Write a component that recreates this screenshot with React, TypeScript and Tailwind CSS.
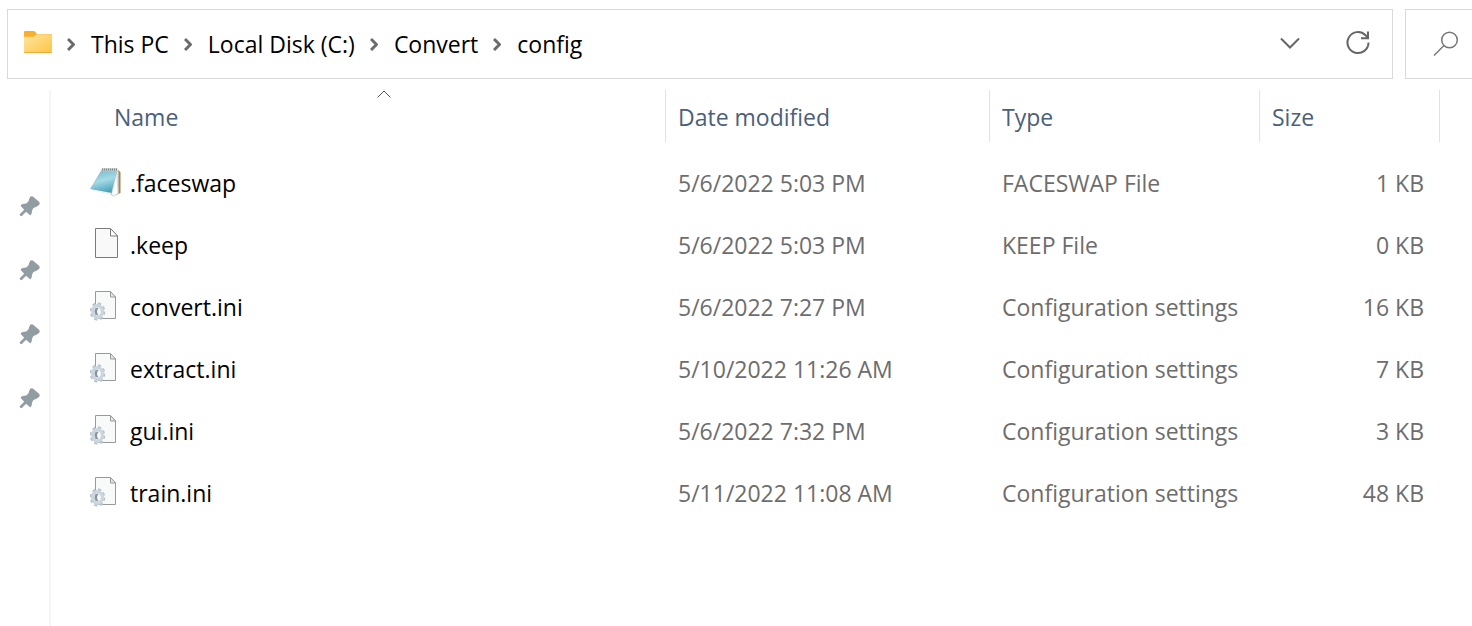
type FileKind = "notepad" | "blank" | "settings";

const crumbs = ["This PC", "Local Disk (C:)", "Convert", "config"];

const pinned = ["Desktop", "Downloads", "Documents", "Pictures"];

const files: { name: string; date: string; type: string; size: string; kind: FileKind }[] = [
  { name: ".faceswap", date: "5/6/2022 5:03 PM", type: "FACESWAP File", size: "1 KB", kind: "notepad" },
  { name: ".keep", date: "5/6/2022 5:03 PM", type: "KEEP File", size: "0 KB", kind: "blank" },
  { name: "convert.ini", date: "5/6/2022 7:27 PM", type: "Configuration settings", size: "16 KB", kind: "settings" },
  { name: "extract.ini", date: "5/10/2022 11:26 AM", type: "Configuration settings", size: "7 KB", kind: "settings" },
  { name: "gui.ini", date: "5/6/2022 7:32 PM", type: "Configuration settings", size: "3 KB", kind: "settings" },
  { name: "train.ini", date: "5/11/2022 11:08 AM", type: "Configuration settings", size: "48 KB", kind: "settings" },
];

const FolderIcon = () => (
  <svg width="30" height="28" viewBox="0 0 30 28" className="shrink-0">
    <defs>
      <linearGradient id="folder" x1="0" y1="0" x2="1" y2="1">
        <stop offset="0" stopColor="#ffe5a0" />
        <stop offset="1" stopColor="#ffc545" />
      </linearGradient>
    </defs>
    <path d="M1 2q0-1 1-1h8.500q1 0 1.700.7L14 4h14q1 0 1 1v8H1z" fill="#f8b02c" />
    <path d="M1 7.500q0-.8.800-.8H10q1 0 1.700-.7l1.300-1.200q.7-.6 1.500-.6H28q1 0 1 1V22q0 1-1 1H2q-1 0-1-1z" fill="url(#folder)" />
    <path d="M1 21.500q0 1.500 1 1.500h26q1 0 1-1.500-.3.700-1 .7H2q-.7 0-1-.7z" fill="#e9a02e" />
  </svg>
);

const CrumbChevron = () => (
  <svg width="8" height="14" viewBox="0 0 8 14" className="shrink-0" fill="none" stroke="#6b6b6b" strokeWidth="3">
    <path d="M1 2l5.500 5.500L1 13" />
  </svg>
);

const PinIcon = () => (
  <svg width="22" height="22" viewBox="0 0 22 22" fill="#929ca3">
    <path d="M11 2q1.200-1.400 2.800-.4l6.300 5.200q1.200 1.300.2 3l-2.300 1.700q-1.700.8-3.600 1.400l-1.300 2.500q-.2 2.500-.9 4-.7 1.300-1.700.4l-3.400-3.100-4 4q-1.100.9-2-.1-.9-1 .1-1.900l4-4-3.100-3.300q-1-1.300.4-2 2.200-.9 4.800-1l2.400-2.400q.3-2.200 1.300-4z" />
  </svg>
);

const NotepadIcon = () => (
  <svg width="32" height="32" viewBox="0 0 32 32">
    <defs>
      <linearGradient id="pad" x1="0.300" y1="0" x2="0.600" y2="1">
        <stop offset="0" stopColor="#78bccd" />
        <stop offset="0.450" stopColor="#a4dbe6" />
        <stop offset="1" stopColor="#449fb7" />
      </linearGradient>
    </defs>
    <path d="M28 3l2.500 2v21L26 28z" fill="#a98549" />
    <path d="M26 3l2.500 1.500v22L24 29 20 27z" fill="#e9eef1" stroke="#a8b4ba" strokeWidth=".5" />
    <path d="M1 22.500l21 5 3-2L9 20z" fill="#8a9ba3" />
    <path d="M11.500 3.500H27L21.500 26 .5 22z" fill="url(#pad)" stroke="#83aab6" strokeWidth=".5" />
    <path d="M.5 22l21 4-.2 1.500L.5 23z" fill="#edf5f7" />
    <path d="M26.800 5L21.500 27.500l3 1.500L28 26z" fill="#fafcfd" stroke="#b7c2c7" strokeWidth=".5" />
    <path d="M12 1.200h15.500l-.5 3H10.900z" fill="#c2c9cc" />
    <path d="M12 2.500h15.500" stroke="#7c878c" strokeWidth="2" strokeDasharray="1 1" />
  </svg>
);

const BlankIcon = () => (
  <svg width="32" height="36" viewBox="0 0 32 36">
    <path d="M5.500 1.500H20l7.500 7.500v21.500h-22z" fill="#f9f9f9" stroke="#7b7b7b" />
    <path d="M20.500 1.500V9h7z" fill="#fff" stroke="#7b7b7b" />
  </svg>
);

const SettingsFileIcon = () => (
  <svg width="32" height="36" viewBox="0 0 32 36">
    <path d="M5.500 2.500H20l5.500 5.500v21.500h-20z" fill="#f8f9f9" stroke="#999" />
    <path d="M20.500 2.500V8h5z" fill="#e8e8e8" stroke="#999" />
    <ellipse cx="7.500" cy="22.500" rx="6.200" ry="7.800" fill="none" stroke="#b7c3cc" strokeWidth="3" strokeDasharray="3 2.520" />
    <ellipse cx="7.500" cy="22.500" rx="4.700" ry="5.800" fill="none" stroke="#cbd5dd" strokeWidth="3.500" />
    <ellipse cx="7.700" cy="22.500" rx="3" ry="3.800" fill="#f6f8f9" />
    <path d="M8.500 18.900a3.200 3.700 0 1 0 0 7.200q-3-3.600 0-7.200z" fill="#87929a" />
  </svg>
);

const FileIcon = ({ kind }: { kind: FileKind }) => {
  if (kind === "notepad") return <NotepadIcon />;
  if (kind === "blank") return <BlankIcon />;
  return <SettingsFileIcon />;
};

const AddressBar = () => (
  <header className="flex gap-3 pt-[9px] pl-[7px]">
    <div className="flex h-[70px] flex-1 items-center border border-[#d9d9d9] pl-[15px]">
      <FolderIcon />
      <nav aria-label="Address" className="flex-1 pl-[14px]">
        <ol className="flex items-center gap-[15px]">
          {crumbs.map((crumb) => (
            <li key={crumb} className="flex items-center gap-4 whitespace-nowrap">
              <CrumbChevron />
              <a href="#" className="text-black">{crumb}</a>
            </li>
          ))}
        </ol>
      </nav>
      <button type="button" aria-label="Previous locations" className="mr-[45px]">
        <svg width="22" height="24" viewBox="0 0 22 24" fill="none" stroke="#666" strokeWidth="2">
          <path d="M2 6.500l9 9 9-9" />
        </svg>
      </button>
      <button type="button" aria-label="Refresh" className="mr-[22px]">
        <svg width="24" height="28" viewBox="0 0 24 28" fill="none" stroke="#666" strokeWidth="2">
          <path d="M22.500 12.500A10.500 10.500 0 1 1 19.500 5.200L22 8" />
          <path d="M22 1.500V8.200H15" />
        </svg>
      </button>
    </div>
    <div className="flex h-[70px] w-[67px] items-center border border-r-0 border-[#d9d9d9] pl-[27px]">
      <button type="button" aria-label="Search">
        <svg width="26" height="26" viewBox="0 0 26 26" fill="none" stroke="#777" strokeWidth="1.500">
          <circle cx="16.500" cy="9" r="7.800" />
          <path d="M11 14.500L1 24.500" />
        </svg>
      </button>
    </div>
  </header>
);

const QuickAccess = () => (
  <aside className="flex w-[51px] shrink-0 flex-col items-center gap-[42px] border-r-2 border-[#f5f5f5] pt-[105px] pl-[10px]">
    {pinned.map((place) => (
      <button key={place} type="button" aria-label={place}>
        <PinIcon />
      </button>
    ))}
  </aside>
);

const FileTable = () => (
  <table className="w-full table-fixed border-collapse text-left">
    <colgroup>
      <col />
      <col className="w-[324px]" />
      <col className="w-[270px]" />
      <col className="w-[180px]" />
    </colgroup>
    <thead className="text-[#4c607a]">
      <tr>
        <th className="p-0 pb-[10px] pl-[51px] font-normal" aria-sort="ascending">
          <div className="relative flex h-[52px] items-center border-r border-[#e2e2e2] pt-0.5 pl-3">
            <button type="button">Name</button>
            <svg width="14" height="8" viewBox="0 0 14 8" className="absolute top-0 left-1/2 -translate-x-1/2" fill="none" stroke="#555">
              <path d="M.5 7.500L7 1l6.500 6.500" />
            </svg>
          </div>
        </th>
        {["Date modified", "Type", "Size"].map((label) => (
          <th key={label} className="p-0 pb-[10px] font-normal">
            <div className="flex h-[52px] items-center border-r border-[#e2e2e2] pt-0.5 pl-3">
              <button type="button">{label}</button>
            </div>
          </th>
        ))}
      </tr>
    </thead>
    <tbody className="text-[#6d6d6d]">
      {files.map((file) => (
        <tr key={file.name} className="h-[62px]">
          <td className="p-0 pl-[39px] text-black">
            <div className="flex items-center gap-2">
              <FileIcon kind={file.kind} />
              {file.name}
            </div>
          </td>
          <td className="p-0 pl-3">{file.date}</td>
          <td className="p-0 pl-3">{file.type}</td>
          <td className="p-0 pr-4 text-right">{file.size}</td>
        </tr>
      ))}
    </tbody>
  </table>
);

const App = () => (
  <div className="flex min-h-screen flex-col bg-white font-['Open_Sans','Noto_Sans',sans-serif] text-[23px] leading-8">
    <AddressBar />
    <div className="flex flex-1 pt-[11px]">
      <QuickAccess />
      <main className="flex-1 pr-8">
        <FileTable />
      </main>
    </div>
  </div>
);

export default App;
